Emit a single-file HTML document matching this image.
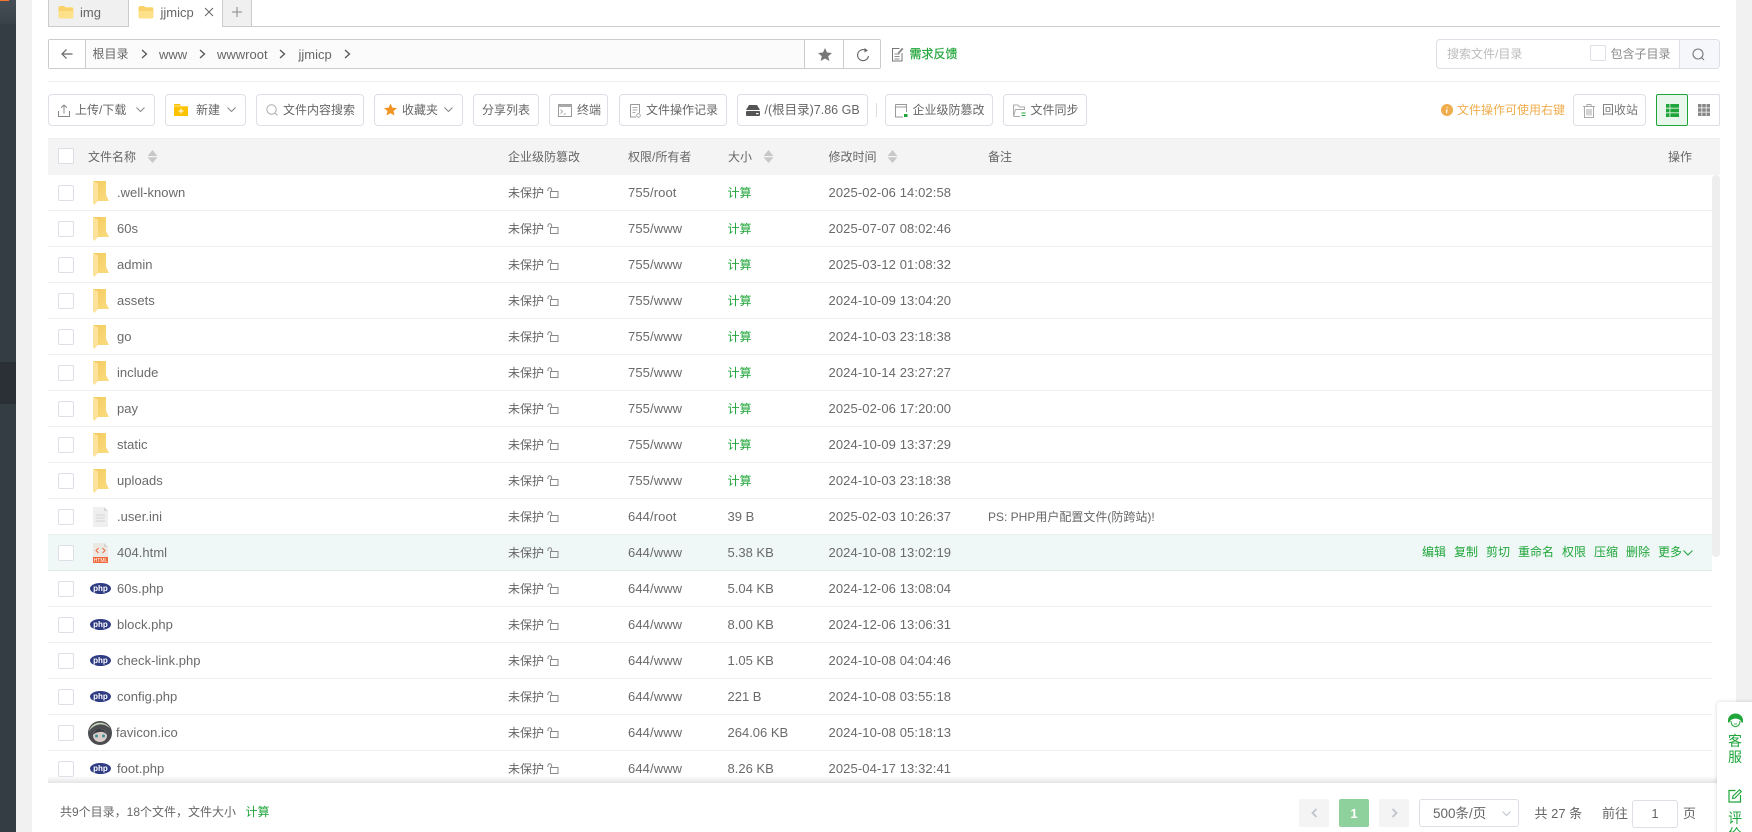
<!DOCTYPE html>
<html lang="zh-CN">
<head>
<meta charset="utf-8">
<title>文件管理</title>
<style>
*{box-sizing:border-box;margin:0;padding:0}
html,body{width:1752px;height:832px;overflow:hidden;background:#fff}
body{position:relative;font:12px/1.2 "Liberation Sans","Noto Sans CJK SC",sans-serif;color:#666}
.ab{position:absolute}
.t{position:absolute;white-space:nowrap}
.btn{position:absolute;top:94px;height:32px;border:1px solid #dcdfe6;border-radius:4px;background:#fff}
.bt{position:absolute;top:103px;line-height:15px;white-space:nowrap;color:#666}
.ic{position:absolute}
.ck{position:absolute;width:16px;height:16px;border:1px solid #dcdfe6;border-radius:2px;background:#fff}
.hd{position:absolute;top:157px;transform:translateY(-50%);white-space:nowrap;color:#666;line-height:16px}
.list{position:absolute;left:48px;top:175px;width:1664px;height:608px;overflow:hidden}
.r{position:relative;height:36px;border-bottom:1px solid #eeeff0;line-height:35px;background:#fff}
.r.on{background:#eff8f7;border-bottom-color:#dcefeb}
.r>span{position:absolute;top:0;white-space:nowrap}
.r .ck{left:10px;top:10px}
.r svg{position:absolute}
.r>span.s,.r>span.g{top:1px}
.n{left:69px;font-size:13px;letter-spacing:.03px;color:#6a6a6a}
.s{left:460px}
.p{left:580px;font-size:13px;letter-spacing:.1px;color:#6a6a6a}
.z{left:679.5px;font-size:13px;color:#6a6a6a}
.g{left:679.5px;color:#20a53a}
.d{left:780.5px;font-size:13px;letter-spacing:.1px;color:#6a6a6a}
.act{color:#20a53a}
</style>
</head>
<body>
<svg width="0" height="0" style="position:absolute">
<defs>
<linearGradient id="fg" x1="0" y1="0" x2="1" y2="1"><stop offset="0" stop-color="#f3cb5e"/><stop offset="1" stop-color="#fbdc80"/></linearGradient>
<symbol id="fo" viewBox="0 0 16 24"><path d="M0 0H13V14L16 20H5Z" fill="url(#fg)"/><path d="M0 0L5 2.500V20L1.200 24L0 22Z" fill="#fde29c"/></symbol>
<symbol id="lk" viewBox="0 0 12 11"><path d="M1 4V2.500A1.800 1.800 0 0 1 4.600 2.500V4.500" fill="none" stroke="#888" stroke-width="1"/><rect x="3.500" y="4.500" width="7.500" height="6" fill="none" stroke="#888" stroke-width="1"/></symbol>
<symbol id="tf" viewBox="0 0 16 14"><rect x=".5" y="2" width="15" height="11.500" rx="2" fill="#fde08a"/><path d="M.5 3.500A2 2 0 0 1 2.500 1H6L8 3H15V6H.5Z" fill="#fad06a"/></symbol>
</defs>
</svg>

<!-- left bars -->
<div class="ab" style="left:0;top:0;width:16px;height:832px;background:#343d44"></div>
<div class="ab" style="left:0;top:0;width:16px;height:24px;background:linear-gradient(#454e56,#3a4249)"></div>
<div class="ab" style="left:0;top:0;width:9px;height:1px;background:#f5762a"></div>
<div class="ab" style="left:0;top:362px;width:16px;height:42px;background:#2b3037"></div>
<div class="ab" style="left:16px;top:0;width:16px;height:832px;background:#f1f1f1"></div>
<div class="ab" style="left:1736px;top:0;width:16px;height:832px;background:#f1f1f1"></div>

<!-- tabs -->
<div class="ab" style="left:48px;top:26px;width:1672px;height:1px;background:#ccc"></div>
<div class="ab" style="left:48px;top:-1px;width:81px;height:28px;background:#f0f0f0;border:1px solid #ccc"></div>
<div class="ab" style="left:128px;top:-1px;width:95px;height:28px;background:#fff;border:1px solid #ccc;border-bottom:0;border-top:0"></div>
<div class="ab" style="left:222px;top:-1px;width:30px;height:28px;background:#f0f0f0;border:1px solid #ccc"></div>
<svg class="ic" style="left:58px;top:5px" width="16" height="14"><use href="#tf"/></svg>
<span class="t" style="left:80px;top:5px;font-size:13px;line-height:15px">img</span>
<svg class="ic" style="left:138px;top:5px" width="16" height="14"><use href="#tf"/></svg>
<span class="t" style="left:160.500px;top:5px;font-size:13px;line-height:15px">jjmicp</span>
<svg class="ic" style="left:204px;top:7px" width="10" height="10"><path d="M1 1L9 9M9 1L1 9" stroke="#666" stroke-width="1"/></svg>
<svg class="ic" style="left:232px;top:7px" width="10" height="10"><path d="M5 0V10M0 5H10" stroke="#888" stroke-width="1"/></svg>

<!-- breadcrumb -->
<div class="ab" style="left:48px;top:39px;width:833px;height:30px;border:1px solid #ccc;border-radius:2px;background:#fbfbfb"></div>
<div class="ab" style="left:49px;top:40px;width:37px;height:28px;background:#fff;border-right:1px solid #ccc"></div>
<svg class="ic" style="left:61px;top:48px" width="12" height="12"><path d="M11.500 6H1M5.500 1.500L1 6L5.500 10.500" fill="none" stroke="#666" stroke-width="1.200"/></svg>
<span class="t" style="left:92.500px;top:47px;line-height:15px">根目录</span>
<svg class="ic" style="left:141px;top:49px" width="7" height="10"><path d="M1 1L5.500 5L1 9" fill="none" stroke="#555" stroke-width="1.300"/></svg>
<span class="t" style="left:159px;top:47px;font-size:13px;line-height:15px">www</span>
<svg class="ic" style="left:199px;top:49px" width="7" height="10"><path d="M1 1L5.500 5L1 9" fill="none" stroke="#555" stroke-width="1.300"/></svg>
<span class="t" style="left:217px;top:47px;font-size:13px;line-height:15px">wwwroot</span>
<svg class="ic" style="left:279px;top:49px" width="7" height="10"><path d="M1 1L5.500 5L1 9" fill="none" stroke="#555" stroke-width="1.300"/></svg>
<span class="t" style="left:298.500px;top:47px;font-size:13px;line-height:15px">jjmicp</span>
<svg class="ic" style="left:344px;top:49px" width="7" height="10"><path d="M1 1L5.500 5L1 9" fill="none" stroke="#555" stroke-width="1.300"/></svg>
<div class="ab" style="left:804px;top:40px;width:40px;height:28px;border-left:1px solid #ccc;border-right:1px solid #ccc;background:#fff"></div>
<div class="ab" style="left:844px;top:40px;width:36px;height:28px;background:#fff"></div>
<svg class="ic" style="left:818px;top:48px" width="14" height="13" viewBox="0 0 14 13"><path d="M7 0L9 4.500L14 5L10.200 8.200L11.400 13L7 10.500L2.600 13L3.800 8.200L0 5L5 4.500Z" fill="#777"/></svg>
<svg class="ic" style="left:856px;top:48px" width="14" height="14" viewBox="0 0 14 14"><path d="M12.500 8A5.500 5.500 0 1 1 9.500 2.200" fill="none" stroke="#666" stroke-width="1.100"/><path d="M8.500 0L12 2.500L8.500 4.500Z" fill="#666"/></svg>
<svg class="ic" style="left:891px;top:47px" width="13" height="15" viewBox="0 0 13 15"><path d="M8.500 1.500H1.500V14H11V6" fill="none" stroke="#777" stroke-width="1"/><path d="M3.500 7H8.500M3.500 9.500H8.500M3.500 12H8.500" stroke="#888"/><path d="M6.500 6L11 .8L12.500 2L8 7Z" fill="#888"/></svg>
<span class="t" style="left:909.500px;top:47px;line-height:15px;color:#20a53a;-webkit-text-stroke:.2px #20a53a">需求反馈</span>

<!-- top search -->
<div class="ab" style="left:1436px;top:39px;width:284px;height:30px;border:1px solid #dcdfe6;border-radius:4px;background:#fff"></div>
<div class="ab" style="left:1679px;top:40px;width:40px;height:28px;border-left:1px solid #dcdfe6;background:#f5f7fa;border-radius:0 3px 3px 0"></div>
<span class="t" style="left:1447px;top:47px;line-height:15px;color:#bbb">搜索文件/目录</span>
<div class="ck" style="left:1590px;top:45px"></div>
<span class="t" style="left:1610.500px;top:47px;line-height:15px;color:#888">包含子目录</span>
<svg class="ic" style="left:1692px;top:48px" width="13" height="13" viewBox="0 0 13 13"><circle cx="6" cy="6" r="5" fill="none" stroke="#777" stroke-width="1.100"/><path d="M9.500 9.500L12 12" stroke="#777" stroke-width="1.100"/></svg>

<div class="ab" style="left:48px;top:81px;width:1672px;height:1px;background:#eee"></div>

<!-- toolbar -->
<div class="btn" style="left:48px;width:107px"></div>
<svg class="ic" style="left:58px;top:104px" width="12" height="13" viewBox="0 0 12 13"><path d="M.5 7V12.500H11.500V7M6 9.500V1M3 3.800L6 1L9 3.800" fill="none" stroke="#888" stroke-width="1"/></svg>
<span class="bt" style="left:75px">上传/下载</span>
<svg class="ic" style="left:136px;top:107px" width="9" height="6"><path d="M.5 .5L4.500 4.500L8.500 .5" fill="none" stroke="#888"/></svg>

<div class="btn" style="left:165px;width:81px"></div>
<svg class="ic" style="left:174px;top:104px" width="14" height="12" viewBox="0 0 14 12"><path d="M0 0H6L7 2H14V12H0Z" fill="#fdc300"/><path d="M0 2H14" stroke="#fff" stroke-width=".6"/><path d="M7 4.500V9.500M4.500 7H9.500" stroke="#fff" stroke-width="1"/></svg>
<span class="bt" style="left:196px">新建</span>
<svg class="ic" style="left:227px;top:107px" width="9" height="6"><path d="M.5 .5L4.500 4.500L8.500 .5" fill="none" stroke="#888"/></svg>

<div class="btn" style="left:256px;width:108px"></div>
<svg class="ic" style="left:266px;top:104px" width="12" height="12" viewBox="0 0 12 12"><circle cx="5.500" cy="5.500" r="4.700" fill="none" stroke="#aaa"/><path d="M9 9L11.500 11.500" stroke="#aaa"/></svg>
<span class="bt" style="left:283px">文件内容搜索</span>

<div class="btn" style="left:374px;width:89px"></div>
<svg class="ic" style="left:383.500px;top:103px" width="13" height="13" viewBox="0 0 14 13"><path d="M7 0L9 4.500L14 5L10.200 8.200L11.400 13L7 10.500L2.600 13L3.800 8.200L0 5L5 4.500Z" fill="#f29423"/></svg>
<span class="bt" style="left:402px">收藏夹</span>
<svg class="ic" style="left:444px;top:107px" width="9" height="6"><path d="M.5 .5L4.500 4.500L8.500 .5" fill="none" stroke="#888"/></svg>

<div class="btn" style="left:473px;width:66px"></div>
<span class="bt" style="left:482px">分享列表</span>

<div class="btn" style="left:549px;width:59px"></div>
<svg class="ic" style="left:558px;top:104px" width="14" height="13" viewBox="0 0 14 13"><rect x=".5" y=".5" width="13" height="12" fill="#fff" stroke="#999"/><rect x=".5" y=".5" width="13" height="2.500" fill="#aaa"/><path d="M2.500 5.500L4.500 7.500L2.500 9.500M5.500 10H8" fill="none" stroke="#999" stroke-width=".8"/></svg>
<span class="bt" style="left:577px">终端</span>

<div class="btn" style="left:619px;width:108px"></div>
<svg class="ic" style="left:630px;top:104px" width="11" height="14" viewBox="0 0 11 14"><path d="M.5 .5H9.500V9M.5 .5V13H6" fill="none" stroke="#999"/><path d="M2.500 3.500H7.500M2.500 6H7.500M2.500 8.500H5.500" stroke="#aaa"/><circle cx="8.500" cy="11.500" r="1.800" fill="none" stroke="#999" stroke-width=".8"/></svg>
<span class="bt" style="left:646px">文件操作记录</span>

<div class="btn" style="left:737px;width:131px"></div>
<svg class="ic" style="left:746px;top:105px" width="14" height="11" viewBox="0 0 14 11"><path d="M3 0H11L14 5H0Z" fill="#555"/><rect y="6" width="14" height="5" rx="1" fill="#555"/><rect x="10" y="8" width="2.500" height="1.200" fill="#fff"/></svg>
<span class="bt" style="left:764.500px;font-size:12.500px">/(根目录)7.86 GB</span>

<div class="ab" style="left:876px;top:103px;width:1px;height:14px;background:#ddd"></div>

<div class="btn" style="left:885px;width:108px"></div>
<svg class="ic" style="left:894.500px;top:104px" width="13" height="14" viewBox="0 0 13 14"><path d="M.5 .5H11.500V8M.5 .5V13H8" fill="none" stroke="#999"/><path d="M.5 3H11.500" stroke="#999"/><rect x="9" y="10" width="3.500" height="3" fill="#20a53a"/></svg>
<span class="bt" style="left:912.500px">企业级防篡改</span>

<div class="btn" style="left:1003px;width:84px"></div>
<svg class="ic" style="left:1013px;top:104px" width="13" height="13" viewBox="0 0 13 13"><path d="M.5 12.500V1H5L6.500 3H11.500V5M.5 12.500H7M.5 12.500L2.500 5.500H12" fill="none" stroke="#aaa"/><path d="M8.500 9H12.500M8.500 11.500H12.500" stroke="#20a53a"/></svg>
<span class="bt" style="left:1030.500px">文件同步</span>

<svg class="ic" style="left:1440.500px;top:104px" width="12" height="12"><circle cx="6" cy="6" r="6" fill="#f0ad4e"/><path d="M6.300 3V3.800M6 5.200L5.500 9.300" stroke="#fff" stroke-width="1.200"/></svg>
<span class="bt" style="left:1457px;color:#f0ad4e">文件操作可使用右键</span>

<div class="btn" style="left:1573px;width:73px"></div>
<svg class="ic" style="left:1583px;top:104px" width="12" height="14" viewBox="0 0 12 14"><path d="M0 2.500H12M4 2.500V.5H8V2.500M1.500 2.500V13.500H10.500V2.500M4 5V11.500M6 5V11.500M8 5V11.500" fill="none" stroke="#aaa"/></svg>
<span class="bt" style="left:1602px;color:#777">回收站</span>

<div class="ab" style="left:1688px;top:94px;width:32px;height:32px;border:1px solid #dcdfe6;border-left:0;border-radius:0 2px 2px 0"></div>
<div class="ab" style="left:1656px;top:94px;width:32px;height:32px;border:1px solid #20a53a;border-radius:2px;background:#e9f6ec"></div>
<svg class="ic" style="left:1666px;top:104px" width="13" height="13"><path d="M0 0H3.500V3.800H0ZM4.300 0H13V3.800H4.300ZM0 4.600H3.500V8.400H0ZM4.300 4.600H13V8.400H4.300ZM0 9.200H3.500V13H0ZM4.300 9.200H13V13H4.300Z" fill="#20a53a"/></svg>
<svg class="ic" style="left:1698px;top:104px" width="12" height="12" fill="#888"><path d="M0 0H3.500V3.500H0ZM4.200 0H7.800V3.500H4.200ZM8.500 0H12V3.500H8.500ZM0 4.200H3.500V7.800H0ZM4.200 4.200H7.800V7.800H4.200ZM8.500 4.200H12V7.800H8.500ZM0 8.500H3.500V12H0ZM4.200 8.500H7.800V12H4.200ZM8.500 8.500H12V12H8.500Z"/></svg>

<!-- table head -->
<div class="ab" style="left:48px;top:138px;width:1672px;height:37px;background:#f4f4f4;border-top:1px solid #eee"></div>
<div class="ck" style="left:58px;top:148px"></div>
<span class="hd" style="left:88px">文件名称</span>
<svg class="ic" style="left:147px;top:150px" width="11" height="13"><path d="M5.500 0L10.500 6H.5ZM.5 7.300H10.500L5.500 13Z" fill="#c8c8c8"/></svg>
<span class="hd" style="left:508px">企业级防篡改</span>
<span class="hd" style="left:628px">权限/所有者</span>
<span class="hd" style="left:728px">大小</span>
<svg class="ic" style="left:763px;top:150px" width="11" height="13"><path d="M5.500 0L10.500 6H.5ZM.5 7.300H10.500L5.500 13Z" fill="#c8c8c8"/></svg>
<span class="hd" style="left:828.500px">修改时间</span>
<svg class="ic" style="left:887px;top:150px" width="11" height="13"><path d="M5.500 0L10.500 6H.5ZM.5 7.300H10.500L5.500 13Z" fill="#c8c8c8"/></svg>
<span class="hd" style="left:988px">备注</span>
<span class="hd" style="left:1668px">操作</span>

<!-- rows -->
<div class="list">
<div class="r"><div class="ck"></div><svg style="left:45px;top:6px" width="16" height="24"><use href="#fo"/></svg><span class="n">.well-known</span><span class="s">未保护</span><svg style="left:498.500px;top:12px" width="12" height="11"><use href="#lk"/></svg><span class="p">755/root</span><span class="g">计算</span><span class="d">2025-02-06 14:02:58</span></div>
<div class="r"><div class="ck"></div><svg style="left:45px;top:6px" width="16" height="24"><use href="#fo"/></svg><span class="n">60s</span><span class="s">未保护</span><svg style="left:498.500px;top:12px" width="12" height="11"><use href="#lk"/></svg><span class="p">755/www</span><span class="g">计算</span><span class="d">2025-07-07 08:02:46</span></div>
<div class="r"><div class="ck"></div><svg style="left:45px;top:6px" width="16" height="24"><use href="#fo"/></svg><span class="n">admin</span><span class="s">未保护</span><svg style="left:498.500px;top:12px" width="12" height="11"><use href="#lk"/></svg><span class="p">755/www</span><span class="g">计算</span><span class="d">2025-03-12 01:08:32</span></div>
<div class="r"><div class="ck"></div><svg style="left:45px;top:6px" width="16" height="24"><use href="#fo"/></svg><span class="n">assets</span><span class="s">未保护</span><svg style="left:498.500px;top:12px" width="12" height="11"><use href="#lk"/></svg><span class="p">755/www</span><span class="g">计算</span><span class="d">2024-10-09 13:04:20</span></div>
<div class="r"><div class="ck"></div><svg style="left:45px;top:6px" width="16" height="24"><use href="#fo"/></svg><span class="n">go</span><span class="s">未保护</span><svg style="left:498.500px;top:12px" width="12" height="11"><use href="#lk"/></svg><span class="p">755/www</span><span class="g">计算</span><span class="d">2024-10-03 23:18:38</span></div>
<div class="r"><div class="ck"></div><svg style="left:45px;top:6px" width="16" height="24"><use href="#fo"/></svg><span class="n">include</span><span class="s">未保护</span><svg style="left:498.500px;top:12px" width="12" height="11"><use href="#lk"/></svg><span class="p">755/www</span><span class="g">计算</span><span class="d">2024-10-14 23:27:27</span></div>
<div class="r"><div class="ck"></div><svg style="left:45px;top:6px" width="16" height="24"><use href="#fo"/></svg><span class="n">pay</span><span class="s">未保护</span><svg style="left:498.500px;top:12px" width="12" height="11"><use href="#lk"/></svg><span class="p">755/www</span><span class="g">计算</span><span class="d">2025-02-06 17:20:00</span></div>
<div class="r"><div class="ck"></div><svg style="left:45px;top:6px" width="16" height="24"><use href="#fo"/></svg><span class="n">static</span><span class="s">未保护</span><svg style="left:498.500px;top:12px" width="12" height="11"><use href="#lk"/></svg><span class="p">755/www</span><span class="g">计算</span><span class="d">2024-10-09 13:37:29</span></div>
<div class="r"><div class="ck"></div><svg style="left:45px;top:6px" width="16" height="24"><use href="#fo"/></svg><span class="n">uploads</span><span class="s">未保护</span><svg style="left:498.500px;top:12px" width="12" height="11"><use href="#lk"/></svg><span class="p">755/www</span><span class="g">计算</span><span class="d">2024-10-03 23:18:38</span></div>
<div class="r"><div class="ck"></div><svg style="left:45px;top:8px" width="15" height="20" viewBox="0 0 15 20"><path d="M0 0H11L15 4V20H0Z" fill="#efefef"/><path d="M11 0L15 4H11Z" fill="#d6d6d6"/><path d="M3 8H12M3 11H12M3 14H12" stroke="#d5d5d5"/></svg><span class="n">.user.ini</span><span class="s">未保护</span><svg style="left:498.500px;top:12px" width="12" height="11"><use href="#lk"/></svg><span class="p">644/root</span><span class="z">39 B</span><span class="d">2025-02-03 10:26:37</span><span style="left:940px;top:1px">PS: PHP用户配置文件(防跨站)!</span></div>
<div class="r on"><div class="ck"></div><svg style="left:45px;top:8px" width="15" height="20" viewBox="0 0 15 20"><path d="M0 0H11L15 4V20H0Z" fill="#ece9e4"/><path d="M11 0L15 4H11Z" fill="#d6d3cc"/><path d="M5.500 5L3 7.500L5.500 10M9.500 5L12 7.500L9.500 10" fill="none" stroke="#ee6b3b" stroke-width="1"/><rect y="14" width="15" height="6" fill="#ee6b3b"/><text x="7.500" y="19" font-size="5" fill="#fff" text-anchor="middle" font-family="Liberation Sans">HTML</text></svg><span class="n">404.html</span><span class="s">未保护</span><svg style="left:498.500px;top:12px" width="12" height="11"><use href="#lk"/></svg><span class="p">644/www</span><span class="z">5.38 KB</span><span class="d">2024-10-08 13:02:19</span>
<span class="act" style="left:1374px">编辑</span><span class="act" style="left:1406px">复制</span><span class="act" style="left:1438px">剪切</span><span class="act" style="left:1470px">重命名</span><span class="act" style="left:1514px">权限</span><span class="act" style="left:1546px">压缩</span><span class="act" style="left:1578px">删除</span><span class="act" style="left:1610px">更多</span><svg style="left:1635px;top:15px" width="10" height="6"><path d="M.5 .5L5 5L9.500 .5" fill="none" stroke="#20a53a"/></svg></div>
<div class="r"><div class="ck"></div><svg style="left:42px;top:12px" width="21" height="11" viewBox="0 0 21 11"><ellipse cx="10.500" cy="5.500" rx="10.500" ry="5.500" fill="#2f3b82"/><text x="10.500" y="8" font-size="8" font-weight="bold" fill="#fff" text-anchor="middle" font-family="Liberation Sans">php</text></svg><span class="n">60s.php</span><span class="s">未保护</span><svg style="left:498.500px;top:12px" width="12" height="11"><use href="#lk"/></svg><span class="p">644/www</span><span class="z">5.04 KB</span><span class="d">2024-12-06 13:08:04</span></div>
<div class="r"><div class="ck"></div><svg style="left:42px;top:12px" width="21" height="11" viewBox="0 0 21 11"><ellipse cx="10.500" cy="5.500" rx="10.500" ry="5.500" fill="#2f3b82"/><text x="10.500" y="8" font-size="8" font-weight="bold" fill="#fff" text-anchor="middle" font-family="Liberation Sans">php</text></svg><span class="n">block.php</span><span class="s">未保护</span><svg style="left:498.500px;top:12px" width="12" height="11"><use href="#lk"/></svg><span class="p">644/www</span><span class="z">8.00 KB</span><span class="d">2024-12-06 13:06:31</span></div>
<div class="r"><div class="ck"></div><svg style="left:42px;top:12px" width="21" height="11" viewBox="0 0 21 11"><ellipse cx="10.500" cy="5.500" rx="10.500" ry="5.500" fill="#2f3b82"/><text x="10.500" y="8" font-size="8" font-weight="bold" fill="#fff" text-anchor="middle" font-family="Liberation Sans">php</text></svg><span class="n">check-link.php</span><span class="s">未保护</span><svg style="left:498.500px;top:12px" width="12" height="11"><use href="#lk"/></svg><span class="p">644/www</span><span class="z">1.05 KB</span><span class="d">2024-10-08 04:04:46</span></div>
<div class="r"><div class="ck"></div><svg style="left:42px;top:12px" width="21" height="11" viewBox="0 0 21 11"><ellipse cx="10.500" cy="5.500" rx="10.500" ry="5.500" fill="#2f3b82"/><text x="10.500" y="8" font-size="8" font-weight="bold" fill="#fff" text-anchor="middle" font-family="Liberation Sans">php</text></svg><span class="n">config.php</span><span class="s">未保护</span><svg style="left:498.500px;top:12px" width="12" height="11"><use href="#lk"/></svg><span class="p">644/www</span><span class="z">221 B</span><span class="d">2024-10-08 03:55:18</span></div>
<div class="r"><div class="ck"></div><svg style="left:40px;top:5px" width="24" height="26" viewBox="0 0 24 26"><circle cx="12" cy="13" r="12" fill="#4a4c50"/><path d="M1 11A11.500 11 0 0 1 22 8Q16 3.500 11 4.500Q5 5.500 1 11Z" fill="#c4cdb8"/><ellipse cx="12" cy="15.500" rx="7" ry="6.500" fill="#d9ccc8"/><path d="M4.500 15Q8 8 12 9Q17 9 19.500 15Q15 11 12 12Q8 12 4.500 15Z" fill="#3a3d42"/><circle cx="8.500" cy="16" r="1.500" fill="#3c9097"/><circle cx="15.500" cy="16" r="1.500" fill="#3c9097"/></svg><span class="n" style="left:68px">favicon.ico</span><span class="s">未保护</span><svg style="left:498.500px;top:12px" width="12" height="11"><use href="#lk"/></svg><span class="p">644/www</span><span class="z">264.06 KB</span><span class="d">2024-10-08 05:18:13</span></div>
<div class="r"><div class="ck"></div><svg style="left:42px;top:12px" width="21" height="11" viewBox="0 0 21 11"><ellipse cx="10.500" cy="5.500" rx="10.500" ry="5.500" fill="#2f3b82"/><text x="10.500" y="8" font-size="8" font-weight="bold" fill="#fff" text-anchor="middle" font-family="Liberation Sans">php</text></svg><span class="n">foot.php</span><span class="s">未保护</span><svg style="left:498.500px;top:12px" width="12" height="11"><use href="#lk"/></svg><span class="p">644/www</span><span class="z">8.26 KB</span><span class="d">2025-04-17 13:32:41</span></div>
</div>

<!-- scrollbar -->
<div class="ab" style="left:1712px;top:175px;width:8px;height:382px;background:#eee;border-radius:4px"></div>

<!-- footer -->
<div class="ab" style="left:48px;top:776px;width:1672px;height:7px;background:linear-gradient(rgba(235,235,235,0),#e4e4e4)"></div>
<span class="t" style="left:60px;top:804px;line-height:16px">共9个目录，18个文件，文件大小</span>
<span class="t" style="left:245.500px;top:804px;line-height:16px;color:#20a53a">计算</span>

<div class="ab" style="left:1299px;top:799px;width:30px;height:28px;background:#f4f4f5;border-radius:2px"></div>
<svg class="ic" style="left:1311px;top:808px" width="7" height="10"><path d="M5.500 1L1.500 5L5.500 9" fill="none" stroke="#c0c4cc" stroke-width="1.800"/></svg>
<div class="ab" style="left:1339px;top:799px;width:30px;height:28px;background:#8fd19d;border-radius:2px;color:#fff;font:bold 13px/29px 'Liberation Sans',sans-serif;text-align:center">1</div>
<div class="ab" style="left:1379px;top:799px;width:30px;height:28px;background:#f4f4f5;border-radius:2px"></div>
<svg class="ic" style="left:1391px;top:808px" width="7" height="10"><path d="M1.500 1L5.500 5L1.500 9" fill="none" stroke="#c0c4cc" stroke-width="1.800"/></svg>
<div class="ab" style="left:1419px;top:799px;width:100px;height:28px;border:1px solid #dcdfe6;border-radius:3px;background:#fff"></div>
<span class="t" style="left:1433px;top:805px;font-size:13.500px;line-height:17px">500条/页</span>
<svg class="ic" style="left:1502px;top:811px" width="9" height="6"><path d="M.5 .5L4.500 4.500L8.500 .5" fill="none" stroke="#c0c4cc"/></svg>
<span class="t" style="left:1534.500px;top:805px;font-size:13px;line-height:17px">共 27 条</span>
<span class="t" style="left:1602px;top:805px;font-size:13px;line-height:17px">前往</span>
<div class="ab" style="left:1632px;top:800px;width:46px;height:28px;border:1px solid #dcdfe6;border-radius:3px;background:#fff;font-size:13px;line-height:26px;text-align:center">1</div>
<span class="t" style="left:1683px;top:805px;font-size:13px;line-height:17px">页</span>

<!-- side panel -->
<div class="ab" style="left:1717px;top:702px;width:40px;height:140px;background:#fff;border-radius:4px 0 0 0;box-shadow:0 0 4px rgba(0,0,0,.16)"></div>
<svg class="ic" style="left:1728px;top:713px" width="15" height="15" viewBox="0 0 15 15"><path d="M0 7.500A7.500 7 0 0 1 15 7.500V9.500H13.500Q13 6 7.500 5.500Q2 6 1.500 9.500H0Z" fill="#20a53a"/><path d="M3 8Q3 13 7.500 13.800Q12 13 12 8" fill="none" stroke="#20a53a" stroke-width="1"/><path d="M6 11H9" stroke="#20a53a" stroke-width=".8"/></svg>
<span class="t" style="left:1728px;top:734px;font-size:14px;line-height:15.500px;color:#20a53a;white-space:normal;width:14px">客服</span>
<svg class="ic" style="left:1728px;top:789px" width="14" height="14" viewBox="0 0 14 14"><path d="M7.500 1.500H1V13H12.500V6" fill="none" stroke="#20a53a" stroke-width="1.200"/><path d="M4.500 9.500L5 7L11.500 .8L13.300 2.500L7 9Z" fill="none" stroke="#20a53a" stroke-width="1.100"/></svg>
<span class="t" style="left:1728px;top:810px;font-size:14px;line-height:16px;color:#20a53a;white-space:normal;width:14px">评价</span>
</body>
</html>
